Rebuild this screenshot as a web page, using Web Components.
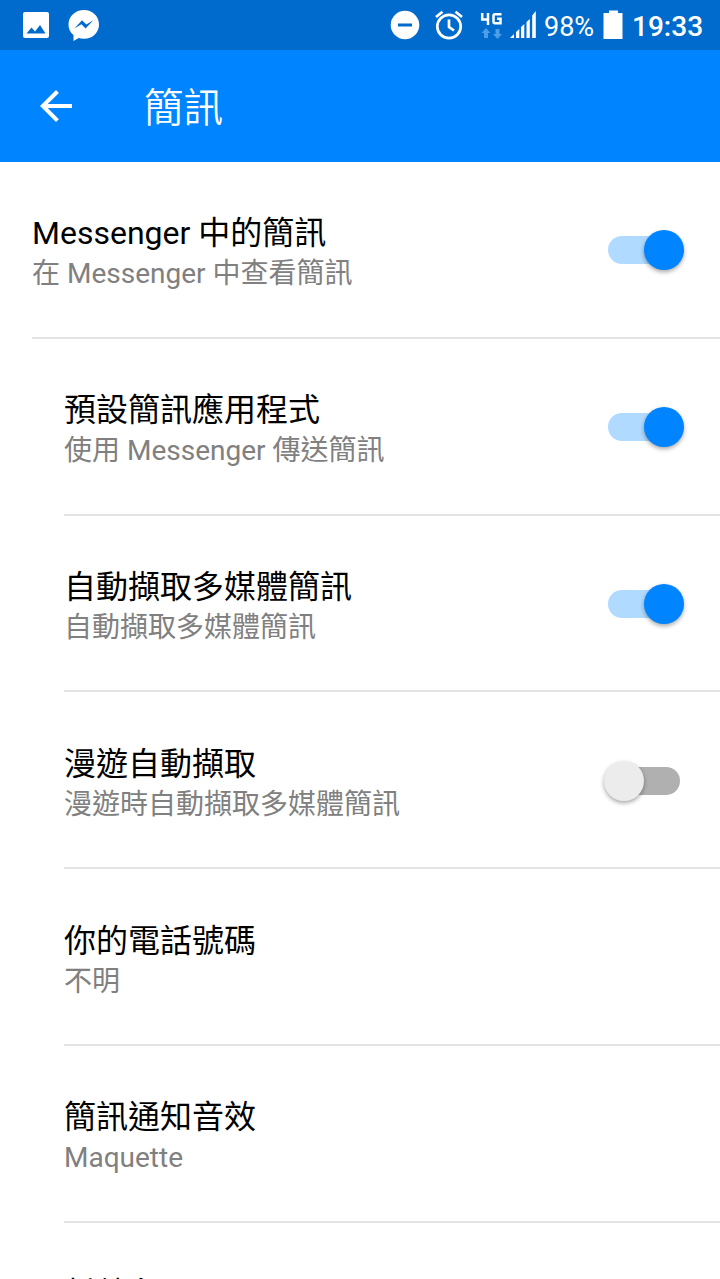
<!DOCTYPE html>
<html lang="zh-Hant">
<head>
<meta charset="utf-8">
<title>簡訊</title>
<style>
  html,
  body {
    margin: 0;
    height: 1279px;
    overflow: hidden;
    background: #fff;
  }
</style>
</head>
<body>
<sms-settings></sms-settings>

<script>
const define = (name, html, setup) => {
  const template = document.createElement('template');
  template.innerHTML = html;

  customElements.define(name, class extends HTMLElement {
    constructor() {
      super();
      this.attachShadow({ mode: 'open' });
      this.shadowRoot.appendChild(template.content.cloneNode(true));
    }

    connectedCallback() {
      if (setup) setup(this);
    }
  });
};

define('status-bar', `
  <style>
    :host {
      display: flex;
      align-items: center;
      box-sizing: border-box;
      height: 50px;
      padding: 0 16px 0 20px;
      background: #006bcc;
      color: #fff;
      font-size: 27px;
    }
    svg { display: block; flex: none; fill: currentColor; }
    .messenger { margin-left: 14px; }
    .spacer { flex: 1; }
    .alarm { margin-left: 14px; }
    .network { margin-left: 15px; }
    .signal { margin-left: 6px; }
    .level { width: 51px; margin-left: 7px; white-space: nowrap; line-height: 32px; padding-top: 3px; }
    .battery { margin-left: 8px; }
    .clock { width: 72px; margin-left: 9px; font-weight: 500; font-size: 28px; white-space: nowrap; line-height: 32px; padding-top: 3px; }
  </style>
  <svg width="32" height="32" viewBox="0 0 32 32">
    <rect x="3" y="3" width="26" height="26" rx="2"/>
    <path fill="#006bcc" d="M6.500 24.500l5-6 3.500 4 5-6.500 5.500 8.500z"/>
  </svg>
  <svg class="messenger" width="36" height="36" viewBox="0 0 36 36">
    <path d="M18 3C9.300 3 2.500 9.400 2.500 17.400c0 4.400 1.800 7.900 5 10.500V34l5.200-3a18 18 0 0 0 5.300.8c8.500 0 15-6.400 15-14.400S26.500 3 18 3z"/>
    <path fill="#006bcc" d="M8.500 21.500l7.500-8.300 4.300 4.300 7-4.300-7.700 8.300-4.200-4.300z"/>
  </svg>
  <span class="spacer"></span>
  <svg width="30" height="30" viewBox="0 0 30 30">
    <circle cx="15" cy="15" r="14.300"/>
    <rect x="8" y="13.500" width="14" height="3" fill="#006bcc"/>
  </svg>
  <svg class="alarm" width="30" height="30" viewBox="0 0 30 30">
    <g fill="none" stroke="currentColor" stroke-width="2.700">
      <circle cx="15" cy="16.500" r="11.700"/>
      <path d="M15 9.500v7.500l5 3.500M2 7l6.500-5.300M28 7l-6.500-5.300"/>
    </g>
  </svg>
  <svg class="network" width="24" height="30" viewBox="0 0 24 30">
    <path fill="none" stroke="currentColor" stroke-width="2.500" d="M3.200 3v6.500h6M9 3v12M22.500 4.300h-6.500c-1 0-1.500.5-1.500 1.500v6c0 1 .5 1.500 1.500 1.500h5.500v-4.500h-3.500"/>
    <path fill="#4c9ee6" d="M7 18l4.500 5h-2.500v5h-4v-5h-2.500zM18.500 29l-4.500-5h2.500v-5h4v5h2.500z"/>
  </svg>
  <svg class="signal" width="28" height="30" viewBox="0 0 28 30">
    <path d="M1 28l4-4v4zM7 28v-6l3.300-3v9zM12 28V17l3.300-3v14zM17.500 28V12l3.300-3v19zM23.200 28V5.500L26.800 1v27z"/>
  </svg>
  <span class="level">98%</span>
  <svg class="battery" width="20" height="30" viewBox="0 0 20 30"><path d="M6 .5h9V3h4.500v26H.5V3H6z"/></svg>
  <span class="clock">19:33</span>
`);

define('app-bar', `
  <style>
    :host {
      display: flex;
      align-items: center;
      height: 112px;
      padding-left: 40px;
      background: #0084ff;
      color: #fff;
    }
    svg { display: block; }
    h1 {
      margin: 0 0 0 72px;
      padding-top: 5px;
      font-size: 39.500px;
      font-weight: 350;
      line-height: 56px;
    }
  </style>
  <svg width="32" height="32" viewBox="0 0 32 32">
    <path d="M32 14v4H7.700l11.200 11.200L16 32 0 16 16 0l2.900 2.900L7.700 14z" fill="currentColor"/>
  </svg>
  <h1><slot></slot></h1>
`);

define('toggle-switch', `
  <style>
    :host {
      display: flex;
      align-items: center;
      width: 72px;
      height: 28px;
      border-radius: 14px;
      background: #b0b0b0;
    }
    .thumb {
      width: 40px;
      height: 40px;
      margin-left: -4px;
      border-radius: 50%;
      background: #ececec;
      box-shadow: 0 2px 4px rgba(0, 0, 0, 0.35);
    }
    :host([checked]) {
      justify-content: flex-end;
      background: #b0daff;
    }
    :host([checked]) .thumb {
      margin: 0 -4px 0 0;
      background: #0084ff;
    }
  </style>
  <span class="thumb"></span>
`, (el) => {
  el.setAttribute('role', 'switch');
  el.setAttribute('aria-checked', String(el.hasAttribute('checked')));
});

define('setting-row', `
  <style>
    :host {
      display: flex;
      align-items: center;
      justify-content: space-between;
      box-sizing: border-box;
      height: 176.800px;
      margin-left: 64px;
      padding: 2px 40px 0 0;
      border-bottom: 2px solid #e4e4e4;
    }
    :host([top]) { margin-left: 32px; }
    .text { padding-top: 6px; }
    .title {
      color: #000;
      font-size: 32px;
      line-height: 42px;
    }
    .summary {
      min-height: 40px;
      color: #808080;
      font-size: 28px;
      line-height: 40px;
    }
    .title, .summary { white-space: nowrap; }
  </style>
  <div class="text">
    <div class="title"><slot></slot></div>
    <div class="summary"><slot name="summary"></slot></div>
  </div>
  <slot name="action"></slot>
`);

define('sms-settings', `
  <style>
    :host {
      display: block;
      width: 720px;
      height: 1279px;
      overflow: hidden;
      background: #fff;
      font-family: Roboto, "Noto Sans CJK TC", sans-serif;
    }
  </style>
  <status-bar></status-bar>
  <app-bar>簡訊</app-bar>
  <main>
    <setting-row top>Messenger 中的簡訊
      <span slot="summary">在 Messenger 中查看簡訊</span>
      <toggle-switch slot="action" checked></toggle-switch>
    </setting-row>
    <setting-row>預設簡訊應用程式
      <span slot="summary">使用 Messenger 傳送簡訊</span>
      <toggle-switch slot="action" checked></toggle-switch>
    </setting-row>
    <setting-row>自動擷取多媒體簡訊
      <span slot="summary">自動擷取多媒體簡訊</span>
      <toggle-switch slot="action" checked></toggle-switch>
    </setting-row>
    <setting-row>漫遊自動擷取
      <span slot="summary">漫遊時自動擷取多媒體簡訊</span>
      <toggle-switch slot="action"></toggle-switch>
    </setting-row>
    <setting-row>你的電話號碼
      <span slot="summary">不明</span>
    </setting-row>
    <setting-row>簡訊通知音效
      <span slot="summary">Maquette</span>
    </setting-row>
    <setting-row>封鎖名單</setting-row>
  </main>
`);
</script>
</body>
</html>
